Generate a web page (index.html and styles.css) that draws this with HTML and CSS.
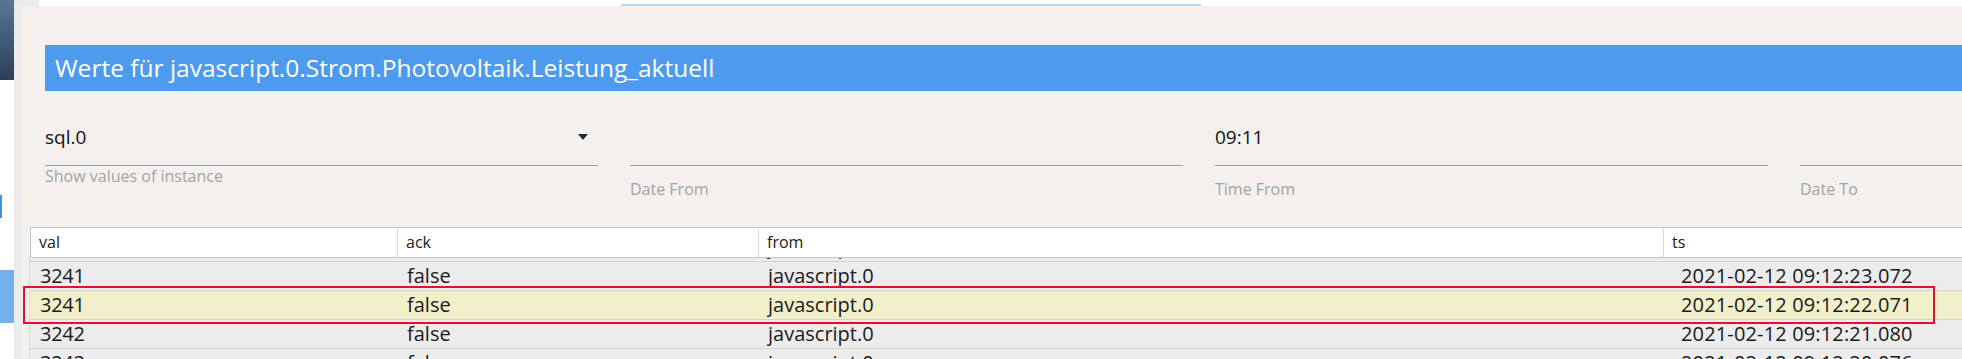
FILE: index.html
```html
<!DOCTYPE html>
<html lang="de">
<head>
  <meta charset="UTF-8" />
  <title>Werte</title>
  <link rel="stylesheet" href="styles.css">
</head>
<body>

  <div class="sidebar">
    <div class="sideImage"></div>
    <div class="sideMark"></div>
    <div class="sideActive"></div>
  </div>
  <div class="strip"></div>

  <div class="main">
    <div class="topBand">
      <div class="topGrey"></div>
      <div class="tabLine"></div>
    </div>

    <div class="dialog">
      <div class="titleBar">Werte für javascript.0.Strom.Photovoltaik.Leistung_aktuell</div>

      <div class="fields">
        <div class="field">
          <div class="fieldInput">
            <span>sql.0</span>
            <span class="arrow"></span>
          </div>
          <div class="helper">Show values of instance</div>
        </div>
        <div class="field">
          <div class="fieldInput"></div>
          <div class="label">Date From</div>
        </div>
        <div class="field">
          <div class="fieldInput"><span>09:11</span></div>
          <div class="label">Time From</div>
        </div>
        <div class="field">
          <div class="fieldInput"></div>
          <div class="label">Date To</div>
        </div>
      </div>

      <div class="table">
        <div class="headRow">
          <div class="headCell">val</div>
          <div class="headCell">ack</div>
          <div class="headCell">from</div>
          <div class="headCell">ts</div>
        </div>
        <div class="tableBody">
          <div class="row first">
            <div class="cell cVal">3241</div>
            <div class="cell">false</div>
            <div class="cell">javascript.0</div>
            <div class="cell cTs">2021-02-12 09:12:24.070</div>
          </div>
          <div class="row">
            <div class="cell cVal">3241</div>
            <div class="cell">false</div>
            <div class="cell">javascript.0</div>
            <div class="cell cTs">2021-02-12 09:12:23.072</div>
          </div>
          <div class="row selected">
            <div class="cell cVal">3241</div>
            <div class="cell">false</div>
            <div class="cell">javascript.0</div>
            <div class="cell cTs">2021-02-12 09:12:22.071</div>
          </div>
          <div class="row">
            <div class="cell cVal">3242</div>
            <div class="cell">false</div>
            <div class="cell">javascript.0</div>
            <div class="cell cTs">2021-02-12 09:12:21.080</div>
          </div>
          <div class="row">
            <div class="cell cVal">3243</div>
            <div class="cell">false</div>
            <div class="cell">javascript.0</div>
            <div class="cell cTs">2021-02-12 09:12:20.076</div>
          </div>
        </div>
      </div>
    </div>
  </div>

  <!-- Markierung der ausgewählten Zeile -->
  <div class="redBox"></div>

</body>
</html>
```

FILE: styles.css
```css
body {
  margin: 0;
  width: 1962px;
  height: 359px;
  overflow: hidden;
  display: flex;
  background-color: #ffffff;
  font-family: 'Open Sans', 'Noto Sans', sans-serif;
  color: #1a1a1a;
  position: relative;
}
.sidebar {
  width: 14px;
  flex-shrink: 0;
  background-color: #ffffff;
}
.sideImage {
  height: 80px;
  background: linear-gradient(180deg, #5b7694 0%, #3f5873 55%, #2c3f57 100%);
}
.sideMark {
  width: 2px;
  height: 23px;
  margin-top: 115px;
  background-color: #3d8fe6;
}
.sideActive {
  height: 53px;
  margin-top: 52px;
  background-color: #72b1ef;
}
.strip {
  width: 8px;
  flex-shrink: 0;
  background-color: #ebebeb;
}
.main {
  flex: 1;
  display: flex;
  flex-direction: column;
  overflow: hidden;
}
.topBand {
  height: 6px;
  display: flex;
  background-color: #ffffff;
}
.topGrey {
  width: 17px;
  background-color: #ebebeb;
}
.tabLine {
  width: 580px;
  height: 2px;
  margin-top: 4px;
  margin-left: 582px;
  background-color: #b4d5f5;
}
.dialog {
  flex: 1;
  background-color: #f4f0ed;
  padding-top: 39px;
  padding-left: 8px;
}
.titleBar {
  margin-left: 15px;
  height: 46px;
  line-height: 46px;
  padding-left: 10px;
  background-color: #4d9aee;
  color: #ffffff;
  font-size: 24.5px;
  white-space: nowrap;
}
.fields {
  margin-left: 15px;
  margin-top: 29px;
  height: 107px;
  display: grid;
  grid-template-columns: repeat(4, 553px);
  column-gap: 32px;
  align-items: start;
}
.fieldInput {
  height: 46px;
  display: flex;
  align-items: flex-start;
  padding-top: 5px;
  box-sizing: border-box;
  border-bottom: 1px solid #9d9d9d;
  font-size: 19px;
  line-height: 24px;
  color: #111111;
}
.arrow {
  margin-left: auto;
  margin-right: 10px;
  margin-top: 9px;
  width: 0;
  height: 0;
  border-left: 5px solid transparent;
  border-right: 5px solid transparent;
  border-top: 6px solid #2a2a2a;
}
.helper, .label {
  font-size: 16px;
  line-height: 20px;
  color: #a3a3a3;
}
.label {
  margin-top: 13px;
}
.table {
  margin-right: -40px;
}
.headRow {
  display: grid;
  grid-template-columns: 366px 361px 905px 1fr;
  height: 31px;
  background-color: #ffffff;
  border: 1px solid #c4c4c4;
  border-right: none;
  box-sizing: border-box;
}
.headCell {
  font-size: 16px;
  line-height: 29px;
  padding-left: 8px;
}
.headCell + .headCell {
  border-left: 1px solid #dcdcdc;
}
.tableBody {
  height: 110px;
  overflow: hidden;
  border-left: 1px solid #d8d8d8;
  margin-left: -1px;
}
.row {
  display: grid;
  grid-template-columns: 367px 361px 905px 1fr;
  height: 29px;
  box-sizing: border-box;
  border-bottom: 1px solid #d2d2d2;
  background-color: #ececec;
}
.row.first {
  margin-top: -25px;
}
.row.selected {
  background-color: #f2efcb;
}
.cell {
  font-size: 20px;
  line-height: 28px;
  padding-left: 10px;
  white-space: nowrap;
}
.cVal {
  letter-spacing: -0.3px;
}
.cTs {
  padding-left: 18px;
  letter-spacing: 0.15px;
}
.redBox {
  position: absolute;
  left: 23px;
  top: 286px;
  width: 1912px;
  height: 38px;
  box-sizing: border-box;
  border: 2px solid #e3112d;
}
```
